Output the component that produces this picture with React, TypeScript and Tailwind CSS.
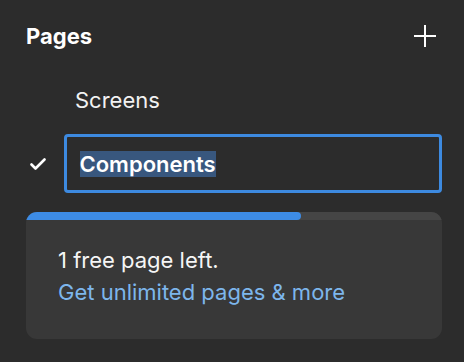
import React from 'react'

export default function App() {
  return (
    <div
      className="w-[464px] h-[362px] bg-[#2c2c2c] text-white overflow-hidden"
      style={{ fontFamily: 'Inter, "Noto Sans", sans-serif' }}
    >
      <div className="pl-[26px] pr-[22px] pt-[22px]">
        {/* header */}
        <div className="flex items-center justify-between h-[28px]">
          <span className="text-[22px] leading-[28px] font-bold">Pages</span>
          <svg width="24" height="24" viewBox="0 0 24 24" className="mr-[5px]">
            <path d="M12 1v22M1 12h22" stroke="#fff" strokeWidth="2" />
          </svg>
        </div>

        {/* page list */}
        <div className="mt-[36px] pl-[49px] text-[22px] leading-[28px] text-[#f2f2f2]">Screens</div>

        <div className="mt-[20px] flex items-center">
          <div className="w-[38px] flex justify-start pl-[4px]">
            <svg width="16" height="12" viewBox="0 0 16 12">
              <path d="M1.5 6.5l4 4 9-9" fill="none" stroke="#fff" strokeWidth="2.6" strokeLinecap="round" strokeLinejoin="round" />
            </svg>
          </div>
          <div className="flex-1 h-[59px] border-[3.5px] border-[#3d8ae0] rounded-[4px] flex items-center pl-[12.5px]">
            <span className="text-[22px] leading-[26px] font-semibold bg-[#38577e]">Components</span>
          </div>
        </div>

        {/* upgrade card */}
        <div className="mt-[19px] rounded-[11px] bg-[#383838] overflow-hidden">
          <div className="h-[8px] bg-[#454545]">
            <div className="h-full w-[275px] bg-[#3d8ce6] rounded-r-full" />
          </div>
          <div className="pl-[32px] pt-[24px] pb-[31px] text-[22px] leading-[32px]">
            <div className="text-[#f5f5f5]">1 free page left.</div>
            <div className="text-[#7db6ec]">Get unlimited pages &amp; more</div>
          </div>
        </div>
      </div>
    </div>
  )
}
